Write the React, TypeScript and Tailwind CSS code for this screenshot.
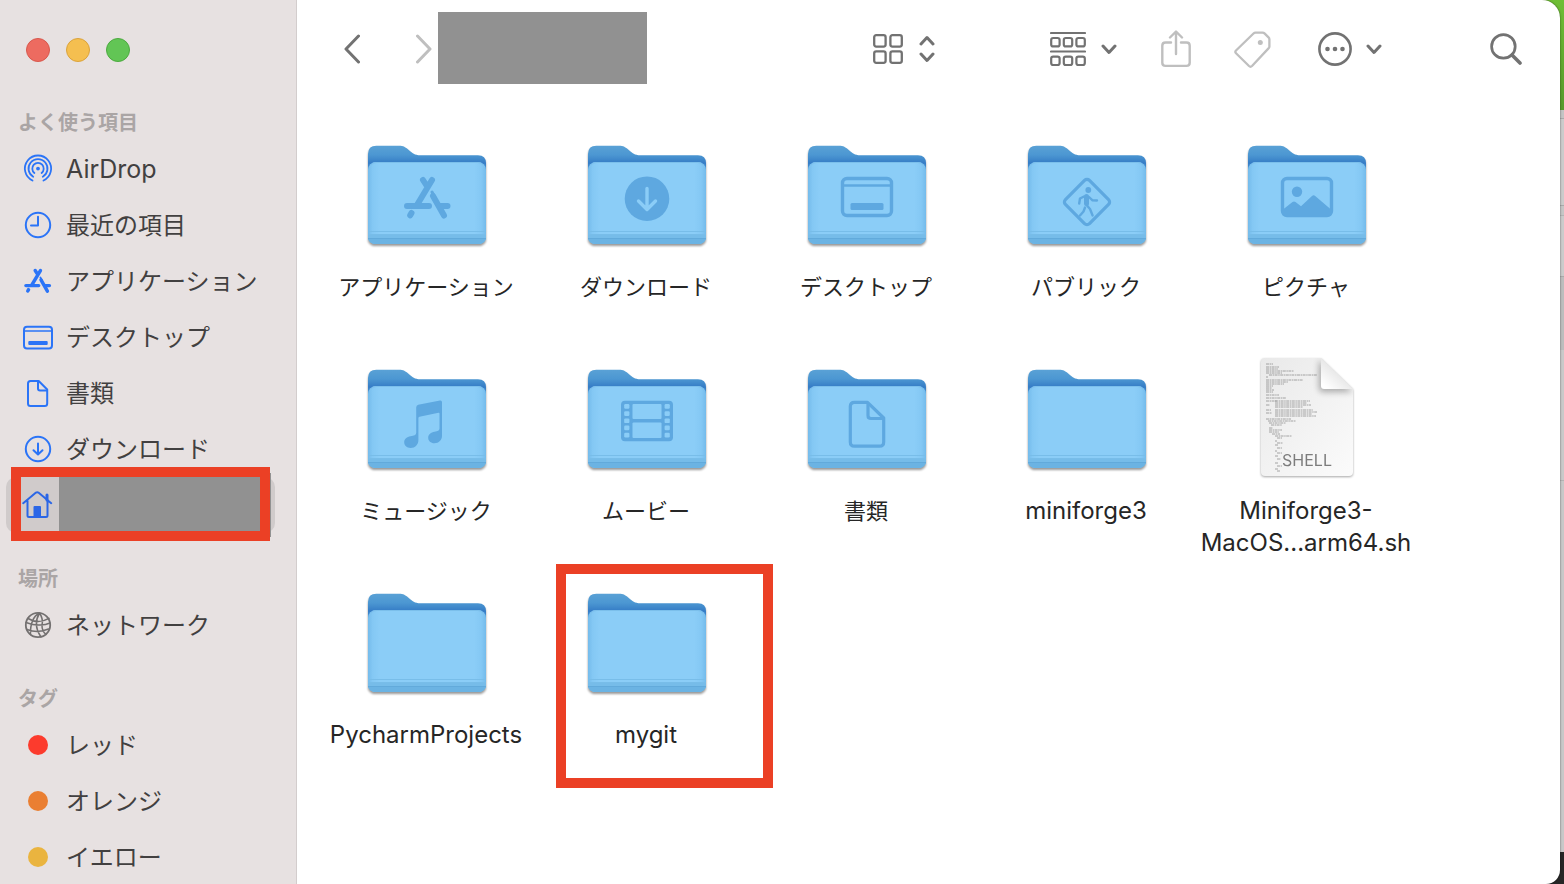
import type { ReactNode } from "react";

type Glyph =
  | "apps"
  | "downloads"
  | "desktop"
  | "public"
  | "pictures"
  | "music"
  | "movies"
  | "documents";

type Entry = {
  name: string;
  lines?: string[];
  glyph?: Glyph;
  kind?: "shell";
  latin?: boolean;
  marked?: boolean;
};

const entries: Entry[] = [
  { name: "アプリケーション", glyph: "apps" },
  { name: "ダウンロード", glyph: "downloads" },
  { name: "デスクトップ", glyph: "desktop" },
  { name: "パブリック", glyph: "public" },
  { name: "ピクチャ", glyph: "pictures" },
  { name: "ミュージック", glyph: "music" },
  { name: "ムービー", glyph: "movies" },
  { name: "書類", glyph: "documents" },
  { name: "miniforge3", latin: true },
  { name: "Miniforge3-MacOS", lines: ["Miniforge3-", "MacOS...arm64.sh"], kind: "shell", latin: true },
  { name: "PycharmProjects", latin: true },
  { name: "mygit", latin: true, marked: true }
];

// x, y, width of each tiny line of code on the shell script page
const codeLines = [
  [23, 8, 7], [23, 11, 13], [23, 13, 12], [23, 15, 28], [23, 17, 16], [26, 19, 48], [23, 21, 2],
  [23, 24, 37], [23, 26, 22], [23, 28, 18], [23, 30, 7], [23, 32, 6], [23, 34, 8], [23, 36, 7], [23, 39, 13],
  [23, 42, 20], [23, 45, 11], [32, 45, 35], [32, 47, 32], [23, 49, 4], [32, 49, 36], [32, 51, 28],
  [23, 54, 5], [32, 54, 38], [32, 56, 42], [23, 57, 6], [32, 58, 37], [32, 60, 41],
  [23, 63, 25], [25, 65, 28], [26, 67, 17], [28, 69, 11], [26, 72, 4], [26, 74, 13], [26, 76, 10],
  [29, 78, 8], [32, 80, 17], [34, 82, 5], [32, 85, 2], [34, 87, 6], [32, 89, 3], [34, 92, 5],
  [32, 95, 2], [34, 97, 5], [32, 100, 3], [34, 103, 4], [32, 107, 3], [34, 110, 5], [32, 113, 3], [34, 115, 3]
];

function AppStoreMark() {
  return (
    <g fill="none" stroke="currentColor" strokeWidth="6" strokeLinecap="round">
      <path d="M69 48 54 73M60 48l4.500 7M44 74h22M48.500 81l-1.300 2.300M81 83.500 70 64M77 74h7.500" />
      <path d="M69 60l3 6" strokeWidth="3" />
    </g>
  );
}

function FolderGlyph({ glyph }: Readonly<{ glyph: Glyph }>) {
  switch (glyph) {
    case "apps":
      return <AppStoreMark />;
    case "downloads":
      return (
        <g>
          <circle cx="64" cy="66.7" r="22.3" fill="currentColor" />
          <path d="M64 56.500V77M55.500 69l8.500 8.500 8.500-8.500" fill="none" stroke="#8bcdf7" strokeWidth="3.4" strokeLinecap="round" strokeLinejoin="round" />
        </g>
      );
    case "desktop":
      return (
        <g fill="none" stroke="currentColor" strokeWidth="3.4">
          <rect x="39.5" y="46.5" width="49" height="37" rx="4.5" />
          <path d="M40 53.500h48" strokeWidth="2.6" />
          <rect x="47.5" y="71" width="33" height="7" rx="1.5" fill="currentColor" stroke="none" />
        </g>
      );
    case "public":
      return (
        <g fill="none" stroke="currentColor" strokeLinecap="round" strokeLinejoin="round">
          <rect x="47" y="53" width="34" height="34" rx="3.5" transform="rotate(45 64 70)" strokeWidth="3.2" />
          <circle cx="65.3" cy="58" r="2.9" fill="currentColor" stroke="none" />
          <path d="M63.500 64.500v7" strokeWidth="5" />
          <path d="M61 64.500l-4 2-.8 5M66 65l3.500 3.300 4.500.2M63.500 73l3.500 4 2.600 6.500M62 75.500l-1.500 4-3.500 4" strokeWidth="2.4" />
        </g>
      );
    case "pictures":
      return (
        <g>
          <rect x="39.5" y="46.5" width="49" height="37" rx="4.5" fill="none" stroke="currentColor" strokeWidth="3.4" />
          <circle cx="54" cy="59.7" r="5.2" fill="currentColor" />
          <path d="M40 77.500l9.500-7.500q1.500-1 3 0l5.500 4.300 11-10.300q1.600-1.300 3.200 0L88 77.500V81q0 3-3 3H43q-3 0-3-3z" fill="currentColor" />
        </g>
      );
    case "music":
      return (
        <path
          d="M53.200 51.500q0-2.200 2-2.700l21.800-4.200q2-.3 2 1.600V80c0 4-3.200 7.200-7.500 7.200-3.800 0-6.300-2.400-6.300-5.500 0-3.500 2.800-5.500 6.300-6 3.300-.5 5-1.200 5-3.200V57.500q0-1-1-.8l-19 4q-1.100.2-1.100 1.300V84c0 4.500-3.300 8-7.800 8-3.800 0-6.400-2.500-6.400-5.700 0-3.600 2.800-5.600 6.300-6.100 3.600-.5 5.700-1.200 5.700-3.500z"
          fill="currentColor"
        />
      );
    case "movies":
      return (
        <g>
          <rect x="38" y="44.7" width="52" height="40.6" rx="4" fill="currentColor" />
          <g fill="#8bcdf7">
            <rect x="49.5" y="48" width="29" height="15" rx="1" />
            <rect x="49.5" y="66.5" width="29" height="15.5" rx="1" />
            {[48, 55.2, 62.4, 69.6, 76.8].map((y) => (
              <g key={y}>
                <rect x="41.2" y={y} width="5.2" height="4.7" rx="1.2" />
                <rect x="81.6" y={y} width="5.2" height="4.7" rx="1.2" />
              </g>
            ))}
          </g>
        </g>
      );
    case "documents":
      return (
        <g fill="none" stroke="currentColor" strokeWidth="3.2" strokeLinejoin="round">
          <path d="M51.500 46.300h13L80.700 62v24q0 4.200-4.200 4.200h-25q-4.200 0-4.200-4.200V50.500q0-4.200 4.200-4.200z" />
          <path d="M65 47v12.500q0 3 3 3h12.500" />
        </g>
      );
  }
}

function FolderIcon({ glyph }: Readonly<{ glyph?: Glyph }>) {
  return (
    <svg viewBox="0 0 128 128" className="size-32 text-[#5ea8e0] drop-shadow-[0_2px_1px_rgba(0,0,0,0.4)]" aria-hidden="true">
      <defs>
        <linearGradient id="folder-back" x1="0" y1="13" x2="0" y2="38" gradientUnits="userSpaceOnUse">
          <stop offset="0" stopColor="#5ba2d6" />
          <stop offset="0.4" stopColor="#4c97d2" />
          <stop offset="0.72" stopColor="#357cc6" />
          <stop offset="1" stopColor="#4a94d2" />
        </linearGradient>
        <linearGradient id="folder-side" x1="5" y1="0" x2="123" y2="0" gradientUnits="userSpaceOnUse">
          <stop offset="0" stopColor="#74bbeb" />
          <stop offset="0.04" stopColor="#84c8f4" />
          <stop offset="0.1" stopColor="#8bcdf7" />
          <stop offset="0.9" stopColor="#8bcdf7" />
          <stop offset="0.96" stopColor="#84c8f4" />
          <stop offset="1" stopColor="#74bbeb" />
        </linearGradient>
      </defs>
      <path d="M5 40V22q0-8.300 8.300-8.300H36c4.500 0 6.500 1.500 9.500 4 4 3.400 6 5.500 12 5.500h57.500q8 0 8 8V40z" fill="url(#folder-back)" />
      <rect x="5" y="30" width="118" height="82" rx="8" fill="url(#folder-side)" />
      <path d="M8 33q2-2.500 5-2.500h102q3 0 5 2.500" fill="none" stroke="#7bbfeb" />
      <path d="M5 103h118v1q0 8-8 8H13q-8 0-8-8z" fill="#76bce9" />
      <path d="M5 107h118q-2 5-8 5H13q-6 0-8-5z" fill="#6bb3e3" />
      <path d="M5 99.500h118M5 102.500h118" stroke="#78bde9" />
      <path d="M5 106.500h118" stroke="#62aadb" />
      {glyph ? <FolderGlyph glyph={glyph} /> : null}
    </svg>
  );
}

function ShellIcon() {
  return (
    <svg viewBox="0 0 128 128" className="size-32 drop-shadow-[0_1px_1px_rgba(0,0,0,0.35)]" aria-hidden="true">
      <defs>
        <linearGradient id="page" x1="0" y1="0" x2="1" y2="1">
          <stop offset="0" stopColor="#e9e9e9" />
          <stop offset="1" stopColor="#fbfbfb" />
        </linearGradient>
        <linearGradient id="fold" x1="0.6" y1="0.35" x2="0.1" y2="0.9">
          <stop offset="0" stopColor="#e2e2e2" />
          <stop offset="1" stopColor="#ffffff" />
        </linearGradient>
        <filter id="fold-shade" x="-40%" y="-40%" width="180%" height="180%">
          <feGaussianBlur stdDeviation="3" />
        </filter>
        <clipPath id="page-clip">
          <path d="M22 2h56l32 31v83q0 4-4 4H22q-4 0-4-4V6q0-4 4-4z" />
        </clipPath>
      </defs>
      <path d="M22 2h56l32 31v83q0 4-4 4H22q-4 0-4-4V6q0-4 4-4z" fill="url(#page)" />
      <g stroke="#777" strokeWidth="0.9" strokeDasharray="3 0.6 1.5 0.5">
        {codeLines.map(([x, y, width]) => (
          <path key={`${x}-${y}`} d={`M${x} ${y}h${width}`} opacity="0.7" />
        ))}
      </g>
      <g clipPath="url(#page-clip)">
        <path d="M76 4l34 32H80q-4 0-4-4z" fill="#000" opacity="0.3" filter="url(#fold-shade)" />
      </g>
      <path d="M78 2l32 31H81q-3 0-3-3z" fill="url(#fold)" />
      <text x="64" y="110" textAnchor="middle" fontSize="16" fill="#7c7c7c" className="font-['Inter',sans-serif]">
        SHELL
      </text>
    </svg>
  );
}

function LineIcon({ children, className = "text-[#2b74f7]" }: Readonly<{ children: ReactNode; className?: string }>) {
  return (
    <svg
      viewBox="0 0 32 32"
      className={`size-8 shrink-0 ${className}`}
      fill="none"
      stroke="currentColor"
      strokeWidth="2"
      strokeLinecap="round"
      strokeLinejoin="round"
      aria-hidden="true"
    >
      {children}
    </svg>
  );
}

const favorites = [
  {
    label: "AirDrop",
    latin: true,
    icon: (
      <LineIcon>
        <path d="M10.500 27.500a13.100 13.100 0 1 1 11 0" strokeWidth="1.8" />
        <path d="M11.200 23.800a9.500 9.500 0 1 1 9.600 0" strokeWidth="1.8" />
        <path d="M12.400 20a5.700 5.700 0 1 1 7.200 0" strokeWidth="1.8" />
        <circle cx="16" cy="15.6" r="1.9" fill="currentColor" stroke="none" />
      </LineIcon>
    )
  },
  {
    label: "最近の項目",
    icon: (
      <LineIcon>
        <circle cx="16" cy="16" r="12.2" />
        <path d="M16 7.800v8.700H9" />
      </LineIcon>
    )
  },
  {
    label: "アプリケーション",
    icon: (
      <LineIcon>
        <g transform="translate(-21.6 -22.3) scale(.58)">
          <AppStoreMark />
        </g>
      </LineIcon>
    )
  },
  {
    label: "デスクトップ",
    icon: (
      <LineIcon>
        <rect x="2" y="5.8" width="28" height="21.6" rx="3" />
        <path d="M2.500 10h27" strokeWidth="1.5" />
        <rect x="6.3" y="20" width="19.4" height="4" rx="1" fill="currentColor" stroke="none" />
      </LineIcon>
    )
  },
  {
    label: "書類",
    icon: (
      <LineIcon>
        <path d="M8.500 4h8.200L25.200 12.500V26.500q0 2.500-2.500 2.500H8.500Q6 29 6 26.500V6.500Q6 4 8.500 4z" />
        <path d="M16 4.500v7q0 2 2 2h7" />
      </LineIcon>
    )
  },
  {
    label: "ダウンロード",
    icon: (
      <LineIcon>
        <circle cx="16" cy="16" r="12.2" />
        <path d="M16 10.500v10.800M11.500 17.200l4.500 4.300 4.500-4.300" />
      </LineIcon>
    )
  },
  {
    label: "",
    selected: true,
    icon: (
      <LineIcon className="text-[#2b66e6]">
        <path d="M1.200 14.200 14 3.600q1.200-.9 2.400 0L29.200 14.200M5.500 11.500V26.500q0 1.500 1.500 1.500h17q1.500 0 1.500-1.500V11.500" />
        <path d="M25 6v5" strokeWidth="3" />
        <path d="M11.500 28V18q0-1 1-1h5.500q1 0 1 1v10z" fill="currentColor" stroke="none" />
      </LineIcon>
    )
  }
];

const places = [
  {
    label: "ネットワーク",
    icon: (
      <LineIcon className="text-[#737070]">
        <g strokeWidth="1.5">
          <circle cx="16" cy="16" r="12.2" strokeWidth="1.8" />
          <path d="M6 9.500q10 6 21-.2M4 13.500q8 3 14 2.500 6 0 10-2M5 20.500q11 4 21.500-.500M17.500 4Q8 9 8.500 25.500M17.500 4q-7 12 1.500 24M17.500 4q4 6 2.500 12-.2 6 4 9.500" />
        </g>
      </LineIcon>
    )
  }
];

const tags = [
  { label: "レッド", icon: <TagDot className="bg-[#fc3b2d]" /> },
  { label: "オレンジ", icon: <TagDot className="bg-[#ea7f32]" /> },
  { label: "イエロー", icon: <TagDot className="bg-[#eab43f]" /> }
];

function TagDot({ className }: Readonly<{ className: string }>) {
  return (
    <span className="flex size-8 shrink-0 items-center justify-center">
      <span className={`size-5 rounded-full ${className}`} />
    </span>
  );
}

type SidebarItem = { label: string; icon: ReactNode; latin?: boolean; selected?: boolean };

function SidebarSection({ title, items }: Readonly<{ title: string; items: SidebarItem[] }>) {
  return (
    <section>
      <h2 className="pl-3 pt-[2px] text-[20px] font-bold leading-9 text-[#aaa5a5]">{title}</h2>
      <ul>
        {items.map((item) =>
          item.selected ? (
            <li key="home" className="relative">
              <a href="#home" aria-label="ホーム" className="flex h-14 items-center rounded-[10px] bg-[#d0cbcb] px-4">
                {item.icon}
              </a>
              <span className="absolute -bottom-1 -top-1 left-[53px] right-1 bg-[#919191]" />
              <span className="absolute -bottom-2 -top-[10px] left-[5px] right-[5px] border-[10px] border-[#eb4025]" />
            </li>
          ) : (
            <li key={item.label}>
              <a href="#item" className="flex h-14 items-center gap-3 px-4 text-[#424040]">
                {item.icon}
                <span className={`pt-[2px] ${item.latin ? "text-[25px]" : "text-[24px]"}`}>{item.label}</span>
              </a>
            </li>
          )
        )}
      </ul>
    </section>
  );
}

function Sidebar() {
  return (
    <aside className="flex w-[297px] shrink-0 flex-col overflow-hidden border-r border-[#d3cdcd] bg-[#e7e1e1] pl-[6px] pr-[21px]">
      <div className="flex shrink-0 gap-4 pb-[41px] pl-5 pt-[38px]">
        <button type="button" aria-label="閉じる" className="size-6 rounded-full border border-[#d8584d] bg-[#ed6b60]" />
        <button type="button" aria-label="しまう" className="size-6 rounded-full border border-[#dba33c] bg-[#f5bf50]" />
        <button type="button" aria-label="拡大" className="size-6 rounded-full border border-[#4caa3f] bg-[#62c555]" />
      </div>
      <nav className="flex flex-col gap-[26px]">
        <SidebarSection title="よく使う項目" items={favorites} />
        <SidebarSection title="場所" items={places} />
        <SidebarSection title="タグ" items={tags} />
      </nav>
    </aside>
  );
}

function ToolButton({
  label,
  className,
  viewBox,
  children
}: Readonly<{ label: string; className: string; viewBox: string; children: ReactNode }>) {
  return (
    <button type="button" aria-label={label} className={`shrink-0 ${className}`}>
      <svg
        viewBox={viewBox}
        className="block w-full"
        fill="none"
        stroke="currentColor"
        strokeWidth="3"
        strokeLinecap="round"
        strokeLinejoin="round"
      >
        {children}
      </svg>
    </button>
  );
}

function Toolbar() {
  return (
    <header className="flex h-[98px] shrink-0 items-center pl-[47px] pr-[38px] text-[#727272]">
      <ToolButton label="戻る" className="w-4" viewBox="0 0 16 30">
        <path d="M14.500 2 2 15l12.500 13" />
      </ToolButton>
      <ToolButton label="進む" className="ml-14 w-4 text-[#bfbfbf]" viewBox="0 0 16 30">
        <path d="M1.500 2 14 15 1.500 28" />
      </ToolButton>
      <div className="mb-[2px] ml-[6px] h-[72px] w-[209px] bg-[#919191]" />

      <div className="ml-auto flex items-center gap-4">
        <ToolButton label="アイコン表示" className="w-[30px]" viewBox="0 0 30 30">
          <g strokeWidth="2.3">
            <rect x="1.2" y="1.2" width="11.4" height="11.4" rx="2" />
            <rect x="17.4" y="1.2" width="11.4" height="11.4" rx="2" />
            <rect x="1.2" y="17.4" width="11.4" height="11.4" rx="2" />
            <rect x="17.4" y="17.4" width="11.4" height="11.4" rx="2" />
          </g>
        </ToolButton>
        <ToolButton label="表示方法" className="w-4" viewBox="0 0 16 28">
          <path d="M2 9l6-6.500L14 9M2 19l6 6.500L14 19" />
        </ToolButton>
      </div>
      <div className="ml-[115px] flex items-center gap-[15px]">
        <ToolButton label="グループ" className="w-9" viewBox="0 0 36 36">
          <g strokeWidth="2.2">
            <path d="M1 2h34M1 20.500h34" />
            {[1.2, 13.8, 26.4].map((x) => (
              <g key={x}>
                <rect x={x} y="7" width="8.4" height="8.4" rx="2" />
                <rect x={x} y="25.6" width="8.4" height="8.4" rx="2" />
              </g>
            ))}
          </g>
        </ToolButton>
        <ToolButton label="グループの選択" className="w-4" viewBox="0 0 16 12">
          <path d="M2 3l6 6.500L14 3" />
        </ToolButton>
      </div>
      <ToolButton label="共有" className="ml-11 w-[30px] text-[#bfbfbf]" viewBox="0 0 30 38">
        <g strokeWidth="2.4">
          <path d="M10 12.500H4.500q-3.200 0-3.200 3.200v17q0 3.200 3.200 3.200h21q3.200 0 3.200-3.200v-17q0-3.200-3.200-3.200H20" />
          <path d="M15 24V2M9 7.500l6-6 6 6" />
        </g>
      </ToolButton>
      <ToolButton label="タグ" className="ml-[43px] w-[37px] text-[#bfbfbf]" viewBox="0 0 37 37">
        <path d="M2 19.500 19.500 2.500q.9-.9 2-.9h7q1.200 0 2 .8l4 4q.9.900.9 2v7q0 1.200-.9 2L18 35q-1.500 1.400-3 0L2 22.200q-1.300-1.300 0-2.700z" strokeWidth="2.3" />
        <circle cx="26.3" cy="11.5" r="2.5" fill="currentColor" stroke="none" />
      </ToolButton>
      <div className="ml-[47px] flex items-center gap-[14px]">
        <ToolButton label="アクション" className="w-[34px]" viewBox="0 0 34 34">
          <circle cx="17" cy="17" r="15.6" strokeWidth="2.6" />
          <g fill="currentColor" stroke="none">
            <circle cx="9.5" cy="17" r="2.3" />
            <circle cx="17" cy="17" r="2.3" />
            <circle cx="24.5" cy="17" r="2.3" />
          </g>
        </ToolButton>
        <ToolButton label="アクションの選択" className="w-4" viewBox="0 0 16 12">
          <path d="M2 3l6 6.500L14 3" />
        </ToolButton>
      </div>
      <ToolButton label="検索" className="ml-[108px] w-8" viewBox="0 0 32 32">
        <circle cx="13.4" cy="13.4" r="11.8" strokeWidth="2.7" />
        <path d="M22 22l8 8" strokeWidth="3.6" />
      </ToolButton>
    </header>
  );
}

function FileGrid() {
  return (
    <ul className="grid auto-rows-[224px] grid-cols-[repeat(auto-fill,220px)] pl-5 pt-[34px]">
      {entries.map((entry) => (
        <li key={entry.name} className="relative flex flex-col items-center gap-[11px]">
          {entry.kind === "shell" ? <ShellIcon /> : <FolderIcon glyph={entry.glyph} />}
          <p className={`pr-[2px] text-center leading-8 text-[#262626] ${entry.latin ? "text-[24px]" : "text-[22px]"}`}>
            {(entry.lines ?? [entry.name]).map((line) => (
              <span key={line} className="block whitespace-nowrap">
                {line}
              </span>
            ))}
          </p>
          {entry.marked ? (
            <span className="absolute -top-4 left-[19px] h-[224px] w-[217px] border-[10px] border-[#eb4025]" />
          ) : null}
        </li>
      ))}
    </ul>
  );
}

// Windows of other apps that show past the right edge
function Backdrop() {
  return (
    <div className="absolute inset-y-0 right-0 flex w-10 flex-col" aria-hidden="true">
      <div className="h-[110px] bg-linear-to-b from-[#6fbe35] to-[#579a2b]" />
      <div className="h-[9px] border-b border-[#aaa] bg-[#c4c4c4]" />
      <div className="h-[87px] border-b border-[#aaa] bg-[#cbcbcb]" />
      <div className="h-[10px] border-b border-[#b4b4b4] bg-[#c6c6c6]" />
      <div className="h-[61px] border-b border-[#aaa] bg-[#cbcbcb]" />
      <div className="h-[73px] bg-[#bdbdbd]" />
      <div className="h-[131px] border-b border-[#b4b4b4] bg-[#c9c9c9]" />
      <div className="flex-1 bg-[#c8c8c8]" />
      <div className="h-8 bg-[#262626]" />
    </div>
  );
}

export default function App() {
  return (
    <div className="relative h-screen overflow-hidden pr-1 font-['Inter','Noto_Sans_CJK_JP',sans-serif]">
      <Backdrop />
      <div className="relative flex h-full overflow-hidden rounded-br-[14px] rounded-tr-[18px] bg-white shadow-[0_0_2px_rgba(0,0,0,0.6)]">
        <Sidebar />
        <main className="flex min-w-0 flex-1 flex-col overflow-hidden">
          <Toolbar />
          <FileGrid />
        </main>
      </div>
    </div>
  );
}
